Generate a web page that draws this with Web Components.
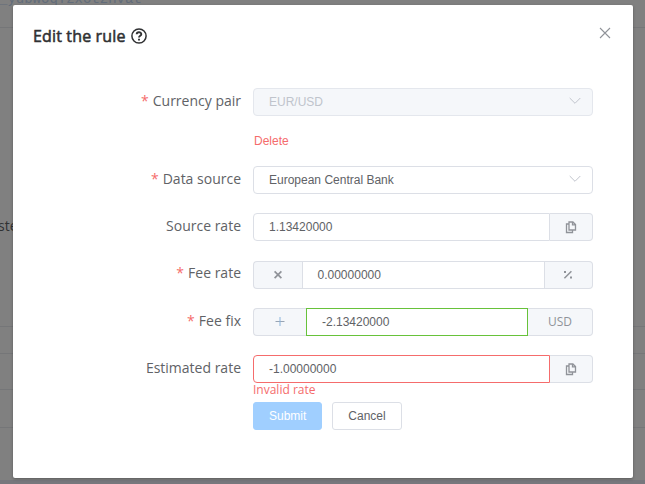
<!DOCTYPE html>
<html lang="en"><head><meta charset="utf-8"><title>Edit the rule</title>
<style>html,body{margin:0;height:100%;overflow:hidden;background:#808080}</style></head><body>
<rule-page></rule-page>
<script>
const def=(name,html)=>customElements.define(name,class extends HTMLElement{
  constructor(){super();this.attachShadow({mode:'open'}).innerHTML=html;}
});
const icons={
  copy:'<svg width="14" height="14" viewBox="0 0 14 14" fill="none" stroke="#909399" stroke-width="1.3"><path d="M5 2H8.9L11.5 4.5V10H5ZM8.5 2V4.8H11.5M5 4H2.5V12.5H8.5V10"/></svg>',
  times:'<svg width="14" height="14" viewBox="0 0 14 14" fill="none" stroke="#909399" stroke-width="1.7"><path d="M3.6 3.4L10.4 10.2M10.4 3.4L3.6 10.2"/></svg>',
  percent:'<svg width="14" height="14" viewBox="0 0 14 14" fill="none" stroke="#909399" stroke-width="1.5"><path d="M3.4 10.2L10.4 3.3"/><path fill="#909399" stroke="none" d="M3 3h2v2H3zM9 8.5h2v2H9z"/></svg>',
  plus:'<svg width="14" height="14" viewBox="0 0 14 14" fill="none" stroke="#8ab4dc"><path stroke="#98a4b3" d="M2.5 6.5H11.5"/><path d="M7 2V11"/></svg>',
  down:'<svg width="12" height="8" viewBox="0 0 12 8" fill="none" stroke="#c0c4cc"><path d="M.7 1L6 6.3L11.3 1"/></svg>',
  close:'<svg width="12" height="12" viewBox="0 0 12 12" fill="none" stroke="#909399" stroke-width="1.1"><path d="M1 1L11 11M11 1L1 11"/></svg>',
  help:'<svg width="16" height="16" viewBox="0 0 16 16" fill="none" stroke="#303133" stroke-width="1.5"><circle cx="8" cy="8" r="7.1"/><path stroke-width="1.9" d="M5.7 6.3C5.7 3.6 10.3 3.6 10.3 6.2C10.3 7.8 8 7.6 8 9.5M8 10.7V12.5"/></svg>'
};
customElements.define('ui-icon',class extends HTMLElement{
  connectedCallback(){this.attachShadow({mode:'open'}).innerHTML='<style>:host{display:inline-flex}svg{display:block}</style>'+icons[this.getAttribute('name')];}
});
def('form-row',`<style>
:host{display:grid;grid-template-columns:228px 340px;column-gap:12px;height:28px}
.label{text-align:right;font:14px/28px "Open Sans",sans-serif;color:#606266;margin-top:-1px;white-space:nowrap}
:host(.fee) .label{margin-top:-2px}
:host([required]) .label::before{content:"*";color:#f56c6c;margin-right:4px}
.field{position:relative}
::slotted([slot=error]){position:absolute;top:29px;left:0;font:12px/12px "Open Sans",sans-serif;color:#f56c6c}
</style><div class="label"><slot name="label"></slot></div><div class="field"><slot></slot><slot name="error"></slot></div>`);
def('text-input',`<style>
:host{display:flex;height:28px;box-sizing:border-box;font:12px/26px "Liberation Sans",sans-serif;color:#606266;--line:#dcdfe6}
:host([state=valid]){--line:#67c23a}:host([state=error]){--line:#f56c6c}
.value{flex:1;border:1px solid var(--line);border-radius:4px;padding:0 15px;white-space:nowrap;display:flex;justify-content:space-between}
:host([post]) .value{border-radius:4px 0 0 4px}:host([pre]) .value{border-radius:0}
:host([disabled]) .value{background:#f5f7fa;border-color:#e4e7ed;color:#c0c4cc}
:host(.rate) .value{padding-left:14.5px}
slot[name=end]::slotted(*){margin:8px -4px 0 0}
slot[name=pre]::slotted(*),slot[name=post]::slotted(*){box-sizing:border-box;height:28px;display:flex;align-items:center;justify-content:center;background:#f5f7fa;color:#909399;border:1px solid #dcdfe6;font:12px/26px "Open Sans",sans-serif}
slot[name=pre]::slotted(*){border-right:0;border-radius:4px 0 0 4px}
slot[name=post]::slotted(*){border-left:0;border-radius:0 4px 4px 0}
</style><slot name="pre"></slot><div class="value"><span><slot></slot></span><slot name="end"></slot></div><slot name="post"></slot>`);
def('push-button',`<style>
:host{display:block;box-sizing:border-box;height:28px;padding:0 15px;border:1px solid #dcdfe6;border-radius:3px;font:12px/26px "Liberation Sans",sans-serif;color:#606266}
:host([primary]){color:#fff;background:#a0cfff;border-color:#a0cfff}
</style><slot></slot>`);
def('modal-dialog',`<style>
:host{display:block;box-sizing:border-box;width:620px;height:473px;background:#fff;border-radius:2px;box-shadow:0 1px 3px rgba(0,0,0,.3)}
header{height:83px;box-sizing:border-box;padding:20px 22px 0 20px;display:flex;justify-content:space-between}
.title{display:flex;gap:5px;font:16px/22px "Open Sans",sans-serif;color:#303133;letter-spacing:.15px;-webkit-text-stroke:.55px #303133}
.title ui-icon{margin-top:3px}header>ui-icon{margin-top:2px}
</style><header><div class="title"><slot name="title"></slot><ui-icon name="help"></ui-icon></div><ui-icon name="close"></ui-icon></header><slot></slot>`);
def('backdrop-page',`<style>
:host{display:grid;grid-template-rows:28px 299px 27px 36px 38px 52px 4px;height:484px;overflow:hidden;background:#808080;color:#303133}
div{border-bottom:1px solid #757678;box-sizing:border-box}
.code{display:flow-root;font:14px/16px "Liberation Mono",monospace;color:#626c7a}.code span{display:block;margin:-9px 0 0 -1px}
.side{font:14px/20px "Open Sans",sans-serif;padding-top:188px}.side span{margin-left:-2px}
.last{border:0}.foot{background:#77777d;border:0}
</style><div class="code"><span>_yubwoqTzxotzhvat</span></div><div class="side"><span>ste</span></div><div></div><div></div><div></div><div class="last"></div><div class="foot"></div>`);
def('rule-page',`<style>
:host{display:grid;width:645px;height:484px;overflow:hidden}
backdrop-page,modal-dialog{grid-area:1/1}
modal-dialog{margin:5px 0 0 13px;z-index:1}
.delete{height:28px;margin:11px 0 11px 241px;font:12px/28px "Liberation Sans",sans-serif;color:#f56c6c}
form-row{margin-bottom:19px}form-row.first{margin:0}form-row.source{margin-bottom:20px}
.actions{display:flex;gap:10px;margin-left:240px}
</style><backdrop-page></backdrop-page><modal-dialog><span slot="title">Edit the rule</span>
<form-row class="first" required><span slot="label">Currency pair</span><text-input disabled>EUR/USD<ui-icon name="down" slot="end"></ui-icon></text-input></form-row>
<div class="delete">Delete</div>
<form-row required><span slot="label">Data source</span><text-input>European Central Bank<ui-icon name="down" slot="end"></ui-icon></text-input></form-row>
<form-row class="source"><span slot="label">Source rate</span><text-input post>1.13420000<span slot="post" style="width:43px"><ui-icon name="copy"></ui-icon></span></text-input></form-row>
<form-row class="fee" required><span slot="label">Fee rate</span><text-input class="rate" pre post><span slot="pre" style="width:49px"><ui-icon name="times"></ui-icon></span>0.00000000<span slot="post" style="width:48px;padding-right:1px"><ui-icon name="percent"></ui-icon></span></text-input></form-row>
<form-row required><span slot="label">Fee fix</span><text-input pre post state="valid"><span slot="pre" style="width:53px"><ui-icon name="plus"></ui-icon></span>-2.13420000<span slot="post" style="width:65px">USD</span></text-input></form-row>
<form-row><span slot="label">Estimated rate</span><text-input post state="error">-1.00000000<span slot="post" style="width:43px"><ui-icon name="copy"></ui-icon></span></text-input><span slot="error">Invalid rate</span></form-row>
<div class="actions"><push-button primary>Submit</push-button><push-button>Cancel</push-button></div>
</modal-dialog>`);
</script></body></html>
